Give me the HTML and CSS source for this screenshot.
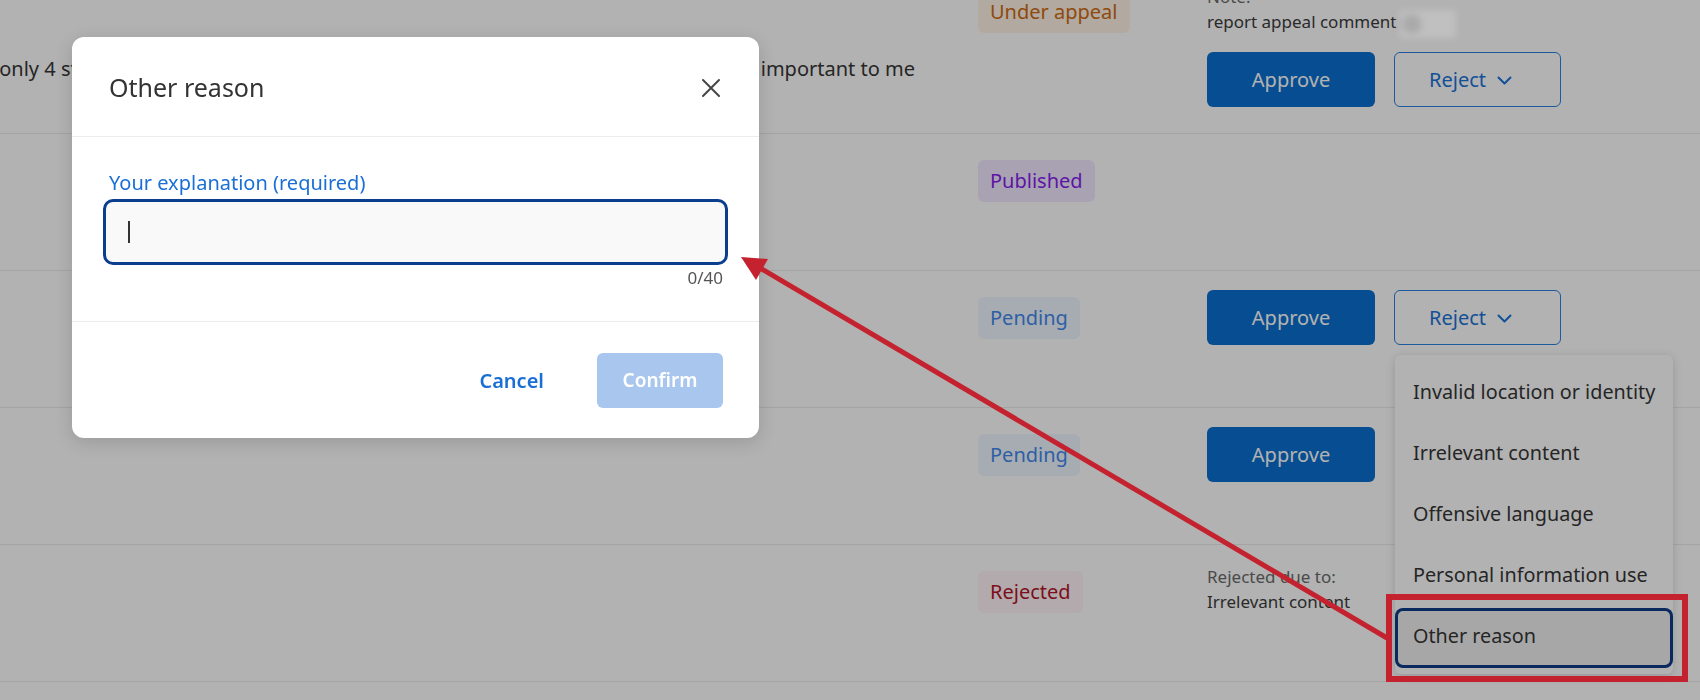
FILE: index.html
```html
<!DOCTYPE html>
<html lang="en">
<head>
<meta charset="utf-8">
<title>Reviews moderation – Other reason</title>
<link rel="stylesheet" href="styles.css">
</head>
<body>
<main class="table">
  <div class="row row-first">
    <div class="cell comment"><span>gave only 4 stars because the delivery took longer than expected, and that is also very important to me</span></div>
    <div class="cell status"><span class="badge badge-appeal">Under appeal</span></div>
    <div class="cell actions">
      <div class="note">
        <div class="note-label">Note:</div>
        <div class="note-text">report appeal comment</div>
      </div>
      <div class="buttons">
        <button class="btn btn-approve">Approve</button>
        <div class="reject-wrap">
          <button class="btn btn-reject">Reject <svg class="chev" width="15" height="9" viewBox="0 0 15 9"><polyline points="1.5,1.5 7.5,7.5 13.5,1.5" fill="none" stroke="currentColor" stroke-width="2" stroke-linecap="round" stroke-linejoin="round"/></svg></button>
        </div>
      </div>
    </div>
  </div>

  <div class="row">
    <div class="cell comment"></div>
    <div class="cell status"><span class="badge badge-published">Published</span></div>
    <div class="cell actions"></div>
  </div>

  <div class="row">
    <div class="cell comment"></div>
    <div class="cell status"><span class="badge badge-pending">Pending</span></div>
    <div class="cell actions">
      <div class="buttons">
        <button class="btn btn-approve">Approve</button>
        <div class="reject-wrap">
          <button class="btn btn-reject">Reject <svg class="chev" width="15" height="9" viewBox="0 0 15 9"><polyline points="1.5,1.5 7.5,7.5 13.5,1.5" fill="none" stroke="currentColor" stroke-width="2" stroke-linecap="round" stroke-linejoin="round"/></svg></button>
          <ul class="menu">
            <li class="menu-item">Invalid location or identity</li>
            <li class="menu-item">Irrelevant content</li>
            <li class="menu-item">Offensive language</li>
            <li class="menu-item">Personal information use</li>
            <li class="menu-item is-focused">Other reason</li>
          </ul>
        </div>
      </div>
    </div>
  </div>

  <div class="row">
    <div class="cell comment"></div>
    <div class="cell status"><span class="badge badge-pending">Pending</span></div>
    <div class="cell actions">
      <div class="buttons">
        <button class="btn btn-approve">Approve</button>
      </div>
    </div>
  </div>

  <div class="row">
    <div class="cell comment"></div>
    <div class="cell status"><span class="badge badge-rejected">Rejected</span></div>
    <div class="cell actions">
      <div class="note">
        <div class="note-label">Rejected due to:</div>
        <div class="note-text">Irrelevant content</div>
      </div>
    </div>
  </div>
</main>

<div class="overlay"></div>

<section class="modal" role="dialog" aria-labelledby="modal-title">
  <header class="modal-header">
    <h2 id="modal-title" class="modal-title">Other reason</h2>
    <button class="close" aria-label="Close">
      <svg width="20" height="20" viewBox="0 0 20 20"><path d="M2 2 L18 18 M18 2 L2 18" stroke="#454545" stroke-width="2" stroke-linecap="round" fill="none"/></svg>
    </button>
  </header>
  <div class="modal-body">
    <label class="field-label">Your explanation (required)</label>
    <div class="field"><span class="caret"></span></div>
    <div class="counter">0/40</div>
  </div>
  <footer class="modal-footer">
    <button class="btn-cancel">Cancel</button>
    <button class="btn-confirm" disabled>Confirm</button>
  </footer>
</section>

<svg class="annotation" width="1700" height="700" viewBox="0 0 1700 700">
  <defs>
    <filter id="blur" x="-50%" y="-50%" width="200%" height="200%"><feGaussianBlur stdDeviation="3"/></filter>
  </defs>
  <g filter="url(#blur)">
    <rect x="1400" y="10" width="56" height="28" fill="#c0c0c0"/>
    <circle cx="1412" cy="24" r="10" fill="#aaaaaa"/>
  </g>
  <line x1="1387" y1="638" x2="760" y2="268" stroke="#c5222f" stroke-width="5"/>
  <polygon points="741,257 768,259 756,280" fill="#c5222f"/>
  <rect x="1389" y="597" width="296" height="82" fill="none" stroke="#c5222f" stroke-width="6"/>
</svg>
</body>
</html>
```
FILE: styles.css
```css
* { box-sizing: border-box; }

html, body {
  margin: 0;
  padding: 0;
}

body {
  width: 1700px;
  height: 700px;
  overflow: hidden;
  position: relative;
  background: #ffffff;
  color: #363636;
  font-family: "Noto Sans", "Open Sans", "Liberation Sans", sans-serif;
}

/* ---------- table ---------- */
.table {
  margin-top: -35px;
}

.row {
  display: grid;
  grid-template-columns: 978px 229px 1fr;
  height: 137px;
  border-bottom: 1px solid #ebebeb;
}

.row-first {
  height: 169px;
}

.comment {
  display: flex;
  justify-content: flex-end;
  overflow: hidden;
  white-space: nowrap;
  padding: 89px 63px 0 0;
  font-size: 20px;
  line-height: 30px;
  color: #363636;
}

.status {
  padding-top: 26px;
}

.badge {
  display: inline-block;
  padding: 6px 12px;
  font-size: 20px;
  line-height: 30px;
  border-radius: 6px;
}

.badge-appeal { background: #fff3e6; color: #cd6a12; }
.badge-published { background: #f3e9ff; color: #861ef0; }
.badge-pending { background: #eff7ff; color: #4288ee; }
.badge-rejected { background: #fff4f6; color: #b3152b; }

.actions {
  padding-top: 19px;
}

.note {
  font-size: 17px;
  line-height: 25px;
}

.note-label { color: #6b6b6b; }
.note-text { color: #3c3c3c; }

.note + .buttons {
  margin-top: 18px;
}

.buttons {
  display: flex;
  gap: 19px;
}

.reject-wrap {
  position: relative;
}

.btn {
  height: 55px;
  border-radius: 6px;
  font-family: inherit;
  font-size: 20px;
  cursor: pointer;
}

.btn-approve {
  width: 168px;
  background: #0b6fd0;
  color: #ffffff;
  border: none;
}

.btn-reject {
  width: 167px;
  background: #ffffff;
  color: #1a73d9;
  border: 1.5px solid #2a80e0;
  display: inline-flex;
  align-items: center;
  justify-content: center;
  gap: 11px;
  padding: 0 14px 0 0;
}

.chev {
  margin-top: 2px;
}

/* ---------- dropdown ---------- */
.menu {
  position: absolute;
  top: calc(100% + 10px);
  left: 1px;
  z-index: 2;
  width: 278px;
  margin: 0;
  padding: 9px 0 6px;
  list-style: none;
  background: #ffffff;
  border-radius: 6px;
  box-shadow: 0 2px 10px rgba(0, 0, 0, 0.16);
}

.menu-item {
  height: 61px;
  padding: 13px 18px 0;
  font-size: 19.8px;
  line-height: 30px;
  color: #363636;
  white-space: nowrap;
  border-radius: 8px;
}

.menu-item.is-focused {
  height: 60px;
  background: #f0f0f0;
  box-shadow: inset 0 0 0 3px #0f3d88;
}

/* ---------- overlay + modal ---------- */
.overlay {
  position: fixed;
  inset: 0;
  z-index: 10;
  background: rgba(0, 0, 0, 0.3);
}

.modal {
  position: absolute;
  left: 72px;
  top: 37px;
  z-index: 20;
  width: 687px;
  height: 401px;
  display: flex;
  flex-direction: column;
  background: #ffffff;
  border-radius: 12px;
  box-shadow: 0 4px 18px rgba(0, 0, 0, 0.14);
}

.modal-header {
  height: 100px;
  display: flex;
  align-items: center;
  justify-content: space-between;
  padding: 0 38px 0 37px;
  border-bottom: 1px solid #ececec;
}

.modal-title {
  margin: 0;
  font-size: 25px;
  font-weight: 400;
  line-height: 36px;
  color: #333333;
}

.close {
  width: 20px;
  height: 20px;
  padding: 0;
  border: none;
  background: none;
  display: flex;
  margin-top: 2px;
}

.modal-body {
  padding: 31px 36px 31px 37px;
}

.field-label {
  display: block;
  margin-bottom: 1px;
  font-size: 20px;
  line-height: 30px;
  color: #1a6fd6;
}

.field {
  height: 66px;
  margin: 0 -5px 0 -6px;
  padding-left: 22px;
  display: flex;
  align-items: center;
  background: #f9f9f9;
  border: 3px solid #0c3e8e;
  border-radius: 10px;
}

.caret {
  width: 2px;
  height: 22px;
  background: #333333;
}

.counter {
  text-align: right;
  font-size: 17px;
  line-height: 25px;
  color: #555555;
}

.modal-footer {
  flex: 1;
  display: flex;
  align-items: center;
  justify-content: flex-end;
  gap: 33px;
  padding: 0 36px;
  border-top: 1px solid #ececec;
}

.btn-cancel {
  height: 55px;
  padding: 0 20px;
  border: none;
  background: none;
  font-family: inherit;
  font-size: 20px;
  font-weight: 600;
  color: #1a6fd6;
}

.btn-confirm {
  width: 126px;
  height: 55px;
  border: none;
  border-radius: 6px;
  background: #a9c7ee;
  color: #ffffff;
  font-family: inherit;
  font-size: 19px;
  font-weight: 600;
}

/* ---------- annotation ---------- */
.annotation {
  position: absolute;
  left: 0;
  top: 0;
  z-index: 30;
  pointer-events: none;
}
```
